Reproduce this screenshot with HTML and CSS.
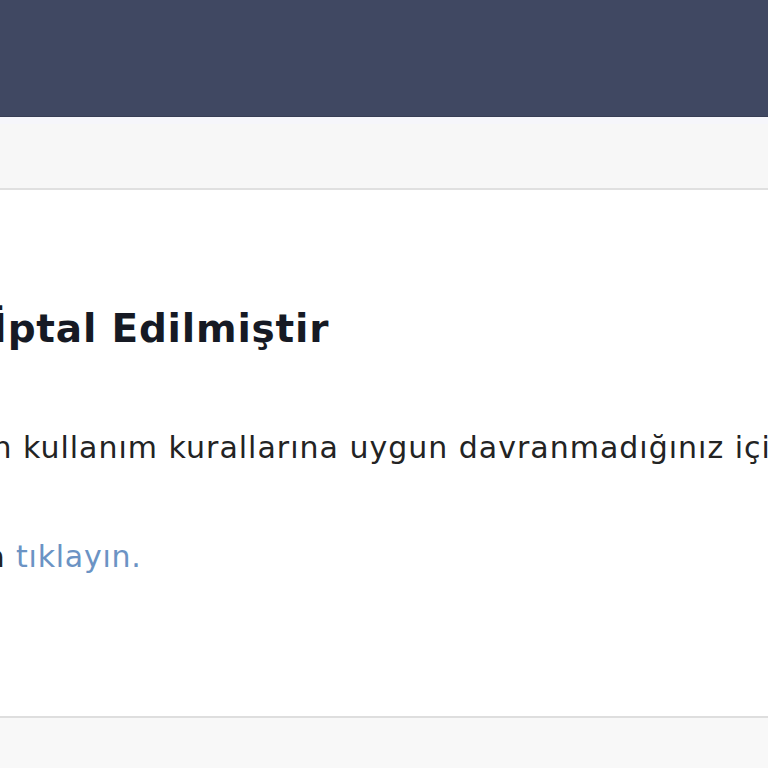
FILE: index.html
```html
<!DOCTYPE html>
<html lang="tr">
<head>
    <meta charset="UTF-8">
    <meta name="viewport" content="width=device-width, initial-scale=1.0">
    <title>Hesap İptal Edildi</title>
    <link rel="stylesheet" href="styles.css">
</head>
<body>
    <div class="topbar"></div>
    <div class="subbar"></div>
    <div class="card">
        <div class="message">
            <h1><span class="hidden-part">Hesabınız </span>İptal Edilmiştir</h1>
            <p class="reason"><span class="hidden-part">Hesabınız, sitemizin </span>kullanım kurallarına uygun davranmadığınız için iptal edilmiştir.</p>
            <p class="help"><span class="hidden-part">Ayrıntılı bilgi için buraya</span> <a href="#">tıklayın.</a></p>
        </div>
    </div>
    <div class="footer"></div>
</body>
</html>
```

FILE: styles.css
```css
body {
    font-family: "DejaVu Sans", "Noto Sans", sans-serif;
    background-color: #f8f8f8;
    margin: 0;
    padding: 0;
    overflow: hidden;
}
.topbar {
    height: 116px;
    background-color: #404862;
    border-bottom: 1px solid #383e55;
}
.subbar {
    height: 64px;
    background-color: #f7f7f7;
    border-top: 7px solid #f6f6fb;
}
.card {
    background-color: #ffffff;
    border-top: 2px solid #e0e0e0;
    border-bottom: 2px solid #dedede;
    height: 526px;
    overflow: hidden;
}
.message {
    white-space: nowrap;
    padding-top: 116px;
}
.message h1 {
    font-size: 39px;
    font-weight: 700;
    letter-spacing: 0.8px;
    color: #161a24;
    margin: 0 0 75px -243px;
    line-height: 1.2;
}
.message p {
    font-size: 30px;
    color: #232323;
    margin: 0;
    line-height: 1.3;
}
.message .reason {
    letter-spacing: 1px;
    margin-left: -307px;
}
.message .help {
    letter-spacing: 0.75px;
    margin-top: 70px;
    margin-left: -376px;
}
.message a {
    color: #6b93c4;
    text-decoration: none;
}
```
